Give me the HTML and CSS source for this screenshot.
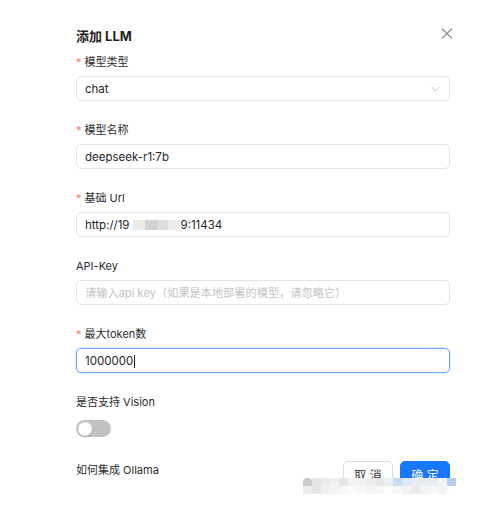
FILE: index.html
```html
<!DOCTYPE html>
<html lang="zh-CN">
<head>
  <meta charset="UTF-8">
  <meta name="viewport" content="width=device-width, initial-scale=1.0">
  <title>添加 LLM</title>
  <link rel="stylesheet" href="styles.css">
</head>
<body>
  <div class="modal">
    <div class="modal-head">
      <h1>添加 LLM</h1>
      <svg class="close" width="12" height="11" viewBox="0 0 12 11">
        <path d="M1 0.5 L11 10.5 M11 0.5 L1 10.5" stroke="#8c8c8c" stroke-width="1.1" fill="none"/>
      </svg>
    </div>

    <div class="field">
      <label><span class="req">*</span>模型类型</label>
      <div class="input select">
        <span>chat</span>
        <svg width="9" height="6" viewBox="0 0 9 6">
          <path d="M0.5 0.8 L4.5 5 L8.5 0.8" stroke="#c4c4c4" stroke-width="1" fill="none"/>
        </svg>
      </div>
    </div>

    <div class="field">
      <label><span class="req">*</span>模型名称</label>
      <div class="input">deepseek-r1:7b</div>
    </div>

    <div class="field">
      <label><span class="req">*</span>基础 Url</label>
      <div class="input">http://19<span class="mask"><span class="m1"></span><span class="m2"></span><span class="m3"></span><span class="m4"></span></span>9:11434</div>
    </div>

    <div class="field">
      <label>API-Key</label>
      <div class="input placeholder">请输入api key（如果是本地部署的模型，请忽略它）</div>
    </div>

    <div class="field">
      <label><span class="req">*</span>最大token数</label>
      <div class="input focused">1000000<span class="caret"></span></div>
    </div>

    <div class="field">
      <label>是否支持 Vision</label>
      <div class="switch-row">
        <span class="switch"><span class="knob"></span></span>
      </div>
    </div>

    <div class="footer">
      <label>如何集成 Ollama</label>
      <div class="actions">
        <button class="btn">取 消</button>
        <button class="btn primary">确 定</button>
      </div>
    </div>

    <div class="blur">
      <span class="b dot"></span><span class="b g2"></span><span class="b g3"></span><span class="b g4"></span><span class="b g2"></span><span class="b g5"></span><span class="b g5"></span><span class="b g3"></span><span class="b g2"></span><span class="b g4"></span><span class="b bl1"></span><span class="b bl2"></span><span class="b bl3"></span><span class="b bl3"></span><span class="b bl3"></span><span class="b g5"></span><span class="b bl4"></span>
      <span class="b g3"></span><span class="b g2"></span><span class="b g4"></span><span class="b g5"></span><span class="b g6"></span><span class="b w"></span><span class="b g6"></span><span class="b g5"></span><span class="b g6"></span><span class="b w"></span><span class="b g6"></span><span class="b g5"></span><span class="b bl3"></span><span class="b g5"></span><span class="b g6"></span><span class="b g5"></span><span class="b w"></span>
    </div>
  </div>
</body>
</html>
```

FILE: styles.css
```css
:root {
  --text: #262626;
  --border: #e3e3e3;
  --blue: #1677ff;
  --red: #ff7875;
}

body {
  margin: 0;
  background: #fff;
  font-family: "Inter", "Noto Sans CJK SC", sans-serif;
  color: var(--text);
}

.modal {
  position: relative;
  width: 504px;
  height: 512px;
  box-sizing: border-box;
  padding: 26px 54px 0 76px;
}

.modal-head {
  display: flex;
  justify-content: space-between;
  align-items: flex-start;
  margin-bottom: 5px;
}

.modal-head h1 {
  margin: 0;
  font-size: 13px;
  line-height: 20px;
  font-weight: 700;
  color: #1f1f1f;
}

.close {
  margin-top: 2px;
  margin-right: -3px;
}

.field {
  margin-bottom: 18px;
}

label {
  display: block;
  font-size: 11px;
  line-height: 20px;
  padding-top: 1px;
  margin-bottom: 4px;
  color: #2b2b2b;
}

.req {
  color: var(--red);
  margin-right: 3px;
  font-size: 11px;
}

.input {
  height: 25px;
  box-sizing: border-box;
  border: 1px solid var(--border);
  border-radius: 5px;
  padding: 1px 8px 0;
  font-size: 11.5px;
  line-height: 23px;
  color: #262626;
  display: flex;
  align-items: center;
}

.select {
  justify-content: space-between;
  padding-right: 9px;
}

.placeholder {
  color: #c4c4c4;
  font-size: 11.2px;
}

.focused {
  border-color: #69a8ff;
  box-shadow: 0 0 0 1px rgba(22, 119, 255, 0.12);
}

.caret {
  display: inline-block;
  width: 1px;
  height: 13px;
  background: #222;
  margin-left: 1px;
}

.mask {
  display: inline-flex;
  height: 10px;
  margin: 0 1px 0 3px;
}

.mask span {
  height: 10px;
}

.m1 { width: 12px; background: #ebebeb; }
.m2 { width: 13px; background: #d2d2d2; }
.m3 { width: 10px; background: #dfdfdf; }
.m4 { width: 12px; background: #ececec; }

.switch-row {
  height: 25px;
  display: flex;
  align-items: center;
}

.switch {
  width: 35px;
  height: 17px;
  border-radius: 9px;
  background: #c2c2c2;
  position: relative;
}

.knob {
  position: absolute;
  top: 1.5px;
  left: 1.5px;
  width: 14px;
  height: 14px;
  border-radius: 50%;
  background: #fff;
  box-shadow: 0 1px 2px rgba(0, 0, 0, 0.2);
}

.footer {
  display: flex;
  justify-content: space-between;
  align-items: flex-start;
}

.actions {
  display: flex;
  gap: 7px;
  margin-top: 2px;
}

.btn {
  width: 50px;
  height: 26px;
  border: 1px solid #d9d9d9;
  border-radius: 5px;
  background: #fff;
  font-family: "Inter", "Noto Sans CJK SC", sans-serif;
  font-size: 12px;
  color: #333;
  padding: 0;
}

.btn.primary {
  background: var(--blue);
  border-color: var(--blue);
  color: #fff;
}

/* pixelated mosaic over the footer */
.blur {
  position: absolute;
  left: 303px;
  top: 478px;
  width: 153px;
  display: grid;
  grid-template-columns: repeat(17, 9px);
  grid-auto-rows: 8px;
}

.b { display: block; }
.dot { background: #c9c9c9; border-radius: 4px 4px 0 0; }
.g2 { background: #e6e6e6; }
.g3 { background: #ececec; }
.g4 { background: #f0f0f0; }
.g5 { background: #f3f3f3; }
.g6 { background: #f8f8f8; }
.w { background: #fdfdfd; }
.bl1 { background: #c9dbf5; }
.bl2 { background: #dde8f7; }
.bl3 { background: #e8edf4; }
.bl4 { background: #b9cff0; }
```
